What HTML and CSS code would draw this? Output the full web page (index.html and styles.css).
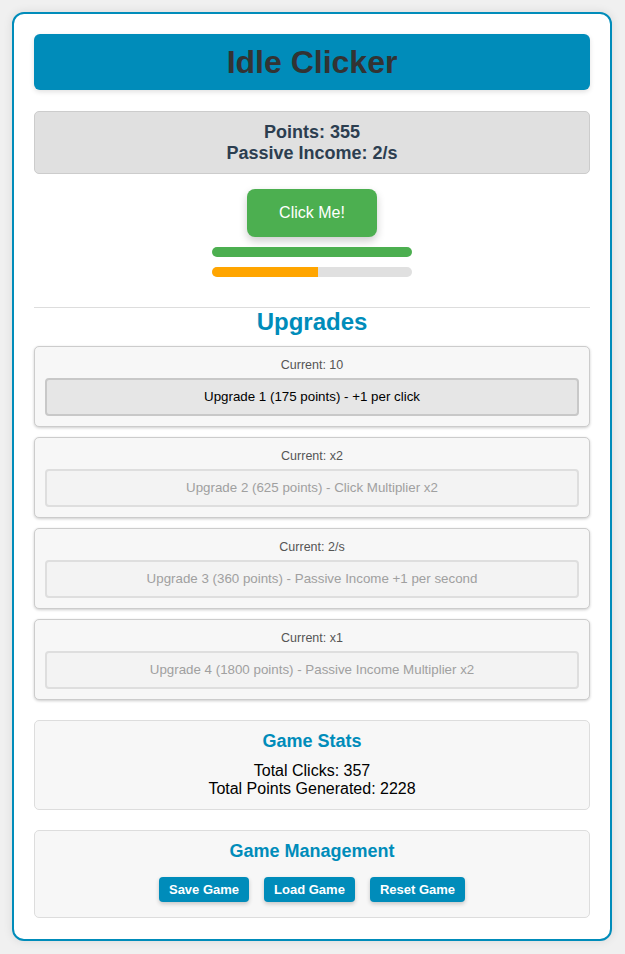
FILE: index.html
```html
<!DOCTYPE html>
<html lang="en">
<head>
<meta charset="utf-8">
<title>Idle Clicker</title>
<link rel="stylesheet" href="styles.css">
</head>
<body>
<div class="game">
  <header class="title-bar"><h1>Idle Clicker</h1></header>

  <div class="score">
    <div>Points: 355</div>
    <div>Passive Income: 2/s</div>
  </div>

  <div class="clicker">
    <button class="click-btn">Click Me!</button>
    <div class="bar"><div class="fill green" style="width:100%"></div></div>
    <div class="bar"><div class="fill orange" style="width:53%"></div></div>
  </div>

  <section class="upgrades">
    <h2>Upgrades</h2>
    <div class="upgrade">
      <div class="current">Current: 10</div>
      <button class="upgrade-btn">Upgrade 1 (175 points) - +1 per click</button>
    </div>
    <div class="upgrade">
      <div class="current">Current: x2</div>
      <button class="upgrade-btn" disabled>Upgrade 2 (625 points) - Click Multiplier x2</button>
    </div>
    <div class="upgrade">
      <div class="current">Current: 2/s</div>
      <button class="upgrade-btn" disabled>Upgrade 3 (360 points) - Passive Income +1 per second</button>
    </div>
    <div class="upgrade">
      <div class="current">Current: x1</div>
      <button class="upgrade-btn" disabled>Upgrade 4 (1800 points) - Passive Income Multiplier x2</button>
    </div>
  </section>

  <section class="panel">
    <h3>Game Stats</h3>
    <div class="stat">Total Clicks: 357</div>
    <div class="stat">Total Points Generated: 2228</div>
  </section>

  <section class="panel">
    <h3>Game Management</h3>
    <div class="actions">
      <button class="action-btn">Save Game</button>
      <button class="action-btn">Load Game</button>
      <button class="action-btn">Reset Game</button>
    </div>
  </section>
</div>
</body>
</html>
```

FILE: styles.css
```css
html, body {
  margin: 0;
  padding: 0;
  background: #f0f0f0;
}

body {
  font-family: "Liberation Sans", Arial, sans-serif;
  padding: 12px 13px 14px 12px;
}

.game {
  box-sizing: border-box;
  width: 600px;
  background: #fff;
  border: 2px solid #008cba;
  border-radius: 12px;
  padding: 20px 20px 21px;
  box-shadow: 0 0 10px rgba(0, 0, 0, 0.1);
  text-align: center;
}

.title-bar {
  background: #008cba;
  border-radius: 6px;
  box-shadow: 0 2px 5px rgba(0, 0, 0, 0.12);
  margin-bottom: 21px;
}

.title-bar h1 {
  margin: 0;
  padding: 10px;
  font-size: 32px;
  line-height: 36px;
  font-weight: bold;
  color: #333;
}

.score {
  background: #e0e0e0;
  border: 1px solid #ccc;
  border-radius: 5px;
  padding: 10px;
  font-size: 18px;
  line-height: 20.5px;
  font-weight: bold;
  color: #2c3e50;
}

.clicker {
  display: flex;
  flex-direction: column;
  align-items: center;
  gap: 10px;
  padding-top: 15px;
  padding-bottom: 30px;
}

.click-btn {
  font-family: inherit;
  font-size: 16px;
  line-height: 18px;
  padding: 15px 32px;
  border: none;
  border-radius: 8px;
  background: #4caf50;
  color: #fff;
  box-shadow: 0 4px 8px rgba(0, 0, 0, 0.2);
}

.bar {
  width: 200px;
  height: 10px;
  background: #e0e0e0;
  border-radius: 5px;
  overflow: hidden;
}

.fill {
  height: 100%;
}

.fill.green { background: #4caf50; }
.fill.orange { background: #ffa500; }

.upgrades {
  border-top: 1px solid #ddd;
  display: flex;
  flex-direction: column;
  gap: 10px;
}

.upgrades h2 {
  margin: 0;
  font-size: 24px;
  line-height: 28px;
  color: #008cba;
}

.upgrade {
  background: #f7f7f7;
  border: 1px solid #ccc;
  border-radius: 5px;
  padding: 10px;
  box-shadow: 0 1px 3px rgba(0, 0, 0, 0.2);
}

.current {
  font-size: 12.5px;
  line-height: 16px;
  color: #555;
  margin-bottom: 5px;
}

.upgrade-btn {
  display: block;
  width: 100%;
  font-family: inherit;
  font-size: 13.333px;
  line-height: 16px;
  padding: 9px;
  border: 2px solid #c8c8c8;
  border-radius: 4px;
  background: #e6e6e6;
  color: #000;
}

.upgrade-btn:disabled {
  background: #f3f3f3;
  border-color: #dedede;
  color: #a0a0a0;
}

.panel {
  margin-top: 20px;
  background: #f7f7f7;
  border: 1px solid #ddd;
  border-radius: 5px;
  padding: 10px;
}

.panel h3 {
  margin: 0 0 10px;
  font-size: 18px;
  line-height: 21px;
  color: #008cba;
}

.stat {
  font-size: 16px;
  line-height: 18.4px;
  color: #000;
}

.actions {
  display: flex;
  justify-content: center;
  gap: 15px;
  padding: 5px 0;
}

.action-btn {
  font-family: inherit;
  font-size: 13px;
  line-height: 15px;
  font-weight: bold;
  padding: 5px 10px;
  border: none;
  border-radius: 4px;
  background: #008cba;
  color: #fff;
  box-shadow: 0 2px 4px rgba(0, 0, 0, 0.2);
}
```
